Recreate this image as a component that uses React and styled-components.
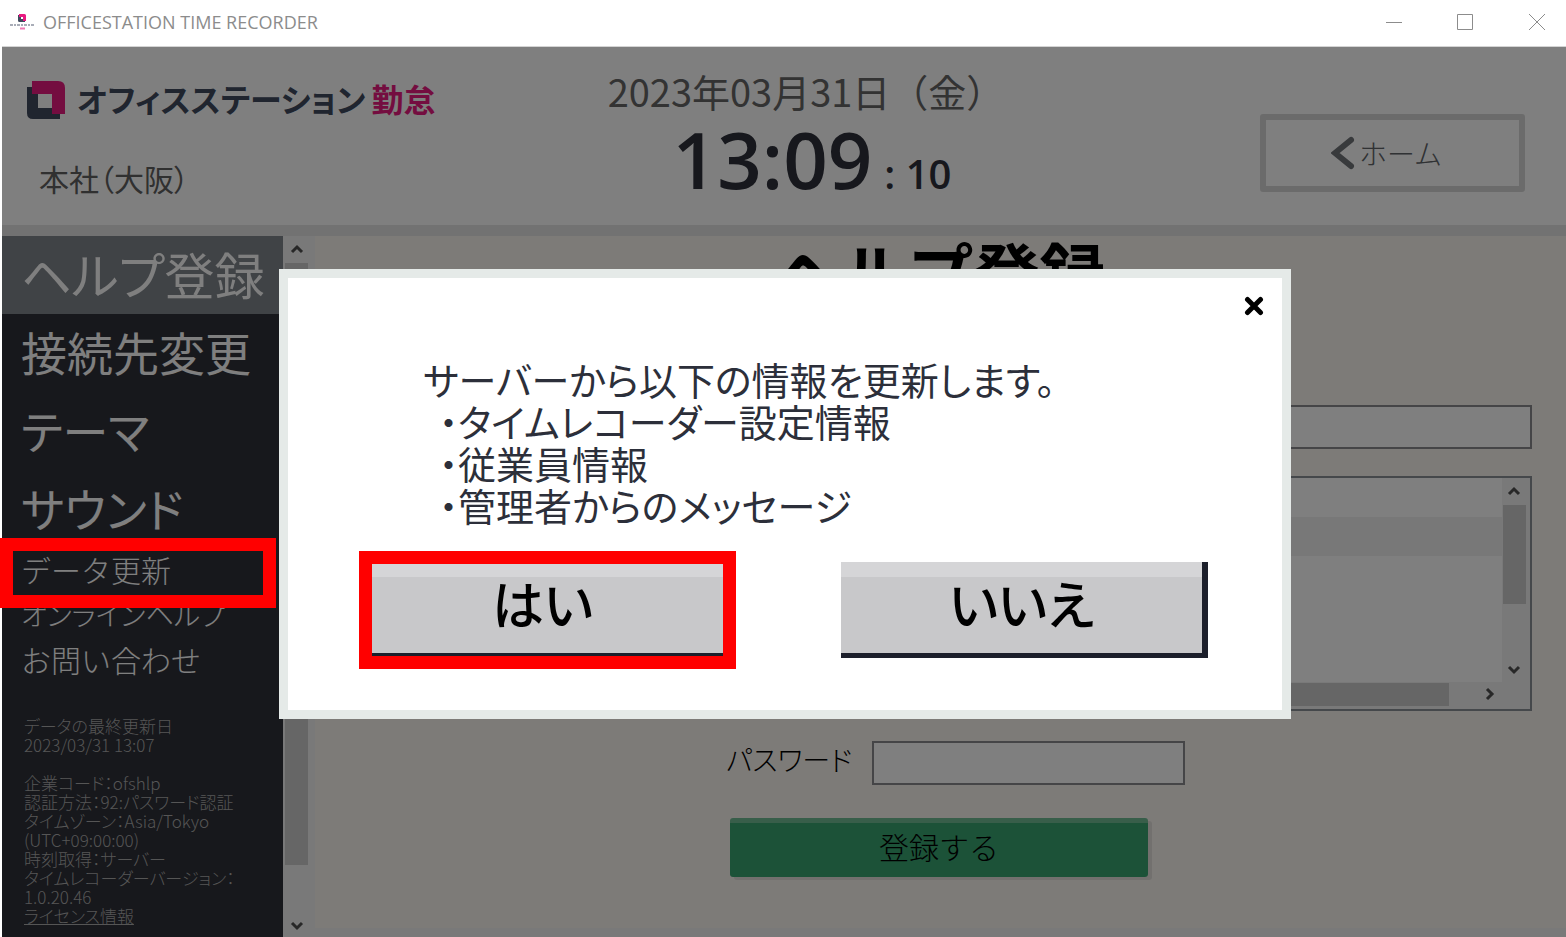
import React from "react";
import styled, { createGlobalStyle, css } from "styled-components";

const JP = `"Noto Sans CJK JP", "Liberation Sans", sans-serif`;

const GlobalStyle = createGlobalStyle`
  *, *::before, *::after { box-sizing: border-box; }
  body { margin: 0; background: #fff; font-family: ${JP}; }
  button, input { font-family: inherit; }
  h1, h2, p, ul, dl, dd { margin: 0; padding: 0; }
  ul { list-style: none; }
`;

const proportional = css`
  font-feature-settings: "palt";
`;

const Window = styled.div`
  display: flex;
  flex-direction: column;
  min-height: 100vh;
  padding-left: 2px;
`;

const TitleBar = styled.div`
  display: flex;
  align-items: center;
  height: 47px;
  padding: 0 0 2px 7px;
  border-bottom: 1px solid #d4d4d4;
`;

const TitleText = styled.span`
  flex: 1;
  margin-left: 8px;
  font-family: "Open Sans", sans-serif;
  font-size: 18px;
  line-height: 24px;
  color: #8c8c8c;
`;

const WindowControls = styled.div`
  display: flex;
  align-items: center;
`;

const WindowButton = styled.button`
  display: flex;
  align-items: center;
  justify-content: center;
  width: 71px;
  height: 44px;
  padding: 0;
  border: 0;
  background: none;

  &:last-child { width: 66px; padding-left: 8px; }
`;

const AppFrame = styled.div`
  position: relative;
  display: flex;
  flex: 1;
  flex-direction: column;
`;

const Header = styled.header`
  display: grid;
  grid-template-columns: 1fr auto 1fr;
  height: 189px;
  padding: 0 41px 0 25px;
  border-bottom: 11px solid #e4e4e4;
  background: #fff;
`;

const Brand = styled.div`
  display: flex;
  flex-direction: column;
  gap: 37px;
  padding-top: 32px;
`;

const BrandRow = styled.div`
  display: flex;
  align-items: center;
  gap: 12px;
  height: 42px;
`;

const BrandName = styled.span`
  ${proportional}
  padding-bottom: 4px;
  font-size: 32px;
  line-height: 38px;
  font-weight: 700;
  color: #404a5e;
  white-space: nowrap;
`;

const BrandProduct = styled.span`
  margin-left: 6px;
  color: #e81a80;
`;

const Branch = styled.p`
  ${proportional}
  padding-left: 12px;
  font-size: 30px;
  line-height: 40px;
  color: #606060;
`;

const ClockBlock = styled.div`
  display: flex;
  flex-direction: column;
  align-items: center;
  padding: 20px 0 0 60px;
`;

const DateText = styled.p`
  font-size: 38px;
  line-height: 48px;
  color: #666;
  white-space: nowrap;
`;

const Clock = styled.p`
  display: flex;
  align-items: baseline;
  gap: 12px;
  padding-left: 12px;
  font-family: "Open Sans", sans-serif;
  font-weight: 600;
  font-size: 78px;
  line-height: 88px;
  color: #2e303a;
`;

const Seconds = styled.span`
  font-size: 40px;
`;

const HomeButton = styled.button`
  display: flex;
  align-items: center;
  justify-content: center;
  gap: 4px;
  justify-self: end;
  width: 265px;
  height: 78px;
  margin-top: 67px;
  padding: 0 12px 0 0;
  border: 6px solid #d7d7d7;
  border-radius: 3px;
  background: #fff;
  font-size: 28px;
  font-weight: 300;
  color: #606468;
`;

const Body = styled.div`
  display: flex;
  flex: 1;
`;

const Sidebar = styled.nav`
  flex: none;
  width: 281px;
  background: #2e3038;
`;

const MenuItem = styled.li`
  position: relative;
  display: flex;
  height: ${(p) => (p.$small ? "45px" : "78px")};
  background: ${(p) => (p.$active ? "#80868c" : "none")};
`;

const MenuLink = styled.a`
  display: flex;
  align-items: center;
  width: 100%;
  padding: 0 0 4px 19px;
  font-size: ${(p) => p.$size}px;
  font-weight: ${(p) => (p.$size <= 30 ? 300 : 400)};
  line-height: 40px;
  color: #fff;
  text-decoration: none;
  white-space: nowrap;
  ${(p) => p.$tight && proportional}
`;

const Highlight = styled.span`
  position: absolute;
  z-index: 3;
  inset: ${(p) => p.$inset};
  border: 13px solid #f00;
  pointer-events: none;
`;

const Info = styled.div`
  ${proportional}
  padding: 33px 0 0 22px;
  font-size: 17px;
  font-weight: 300;
  line-height: 19px;
  color: #aaa;
  white-space: nowrap;

  p + p { margin-top: ${(p) => p.$gap}px; }
`;

const InfoLink = styled.a`
  color: inherit;
`;

const ScrollTrack = styled.div`
  display: flex;
  flex: none;
  flex-direction: ${(p) => (p.$horizontal ? "row" : "column")};
  align-items: center;
  justify-content: space-between;
  background: #f2f2f2;
`;

const PageScroll = styled(ScrollTrack)`
  width: 32px;
  padding: 0 7px 5px 2px;
`;

const ArrowBox = styled.span`
  display: flex;
  align-items: center;
  justify-content: center;
  width: ${(p) => p.$w}px;
  height: ${(p) => p.$h}px;
`;

const PageThumb = styled.span`
  width: 23px;
  flex: 602 0 0;
  background: #cdcdcd;
`;

const TrackRest = styled.span`
  flex: ${(p) => p.$grow} 0 0;
`;

const Content = styled.main`
  display: flex;
  flex: 1;
  flex-direction: column;
  min-width: 0;
  border-bottom: 9px solid #f2f2f2;
  background: #faf6f1;
`;

const PageTitle = styled.h1`
  height: 169px;
  font-size: 66px;
  line-height: 68px;
  font-weight: 700;
  text-align: center;
  color: #000;
`;

const Form = styled.form`
  display: grid;
  grid-template-columns: 146px 1fr;
  align-self: flex-end;
  width: 806px;
  margin-right: 34px;
`;

const TextBox = styled.input`
  grid-column: 2;
  width: ${(p) => (p.$short ? "313px" : "100%")};
  height: 44px;
  padding: 0 8px;
  border: 2px solid #8a8a8e;
  border-radius: 0;
  background: #fff;
  font-size: 24px;
`;

const FieldLabel = styled.label`
  ${proportional}
  font-size: 28px;
  font-weight: 300;
  line-height: 36px;
  color: #000;
`;

const StaffList = styled.div`
  display: grid;
  grid-column: 2;
  grid-template-columns: 1fr 28px;
  grid-template-rows: 1fr 27px;
  height: 235px;
  margin: 27px 0 30px;
  border: 2px solid #8a9096;
  background: #f2f2f2;
`;

const Rows = styled.ul`
  background: #fff;
`;

const Row = styled.li`
  height: 39px;
  background: ${(p) => (p.$shaded ? "#f0f0f0" : "#fff")};
`;

const ListScroll = styled(ScrollTrack)`
  padding: ${(p) => (p.$horizontal ? "0 0 3px" : "0 4px 0 0")};
`;

const ListThumb = styled.span`
  width: ${(p) => (p.$horizontal ? "auto" : "23px")};
  height: ${(p) => (p.$horizontal ? "23px" : "auto")};
  flex: ${(p) => p.$grow} 0 0;
  background: #cdcdcd;
`;

const SubmitButton = styled.button`
  grid-column: 1 / -1;
  width: 418px;
  height: 59px;
  margin: 33px 0 0 4px;
  padding: 0 0 4px;
  border: 0;
  border-radius: 3px;
  background: linear-gradient(#70bc94 0 5px, #38a470 5px);
  box-shadow: 4px 3px 0 #e4e0dc;
  font-size: 30px;
  font-weight: 300;
  color: #000;
`;

const Overlay = styled.div`
  position: absolute;
  z-index: 2;
  inset: 0;
  display: flex;
  align-items: center;
  justify-content: center;
  padding: 4px 0 0 2px;
  background: rgba(0, 0, 0, 0.5);
`;

const Dialog = styled.div`
  position: relative;
  width: 1012px;
  padding: 80px 74px 52px;
  border: 9px solid #e5eae8;
  background: #fff;
`;

const CloseButton = styled.button`
  position: absolute;
  top: 12px;
  right: 12px;
  display: flex;
  align-items: center;
  justify-content: center;
  width: 32px;
  height: 32px;
  padding: 0;
  border: 0;
  background: none;
`;

const Message = styled.div`
  ${proportional}
  padding-left: 61px;
  font-size: 38px;
  line-height: 42px;
  color: #2c2f3a;
  white-space: nowrap;

  ul { padding-left: 16px; }
`;

const DialogActions = styled.div`
  display: flex;
  gap: 112px;
  margin-top: 36px;
`;

const Choice = styled.div`
  position: relative;
`;

const ChoiceButton = styled.button`
  ${proportional}
  width: 367px;
  height: 96px;
  padding: 0 0 10px;
  border: 0 solid #1c1f2b;
  border-width: 0 6px 5px 0;
  background: linear-gradient(#d5d5d7 0 15px, #c8c8ca 15px);
  font-size: 52px;
  font-weight: 500;
  line-height: 60px;
  color: #000;
`;

const chevrons = {
  up: "M2 9 L7 4 L12 9",
  down: "M2 5 L7 10 L12 5",
  right: "M5 2 L10 7 L5 12",
};

function Chevron({ dir }) {
  return (
    <svg width="14" height="14" viewBox="0 0 14 14" aria-hidden="true">
      <path d={chevrons[dir]} fill="none" stroke="#505050" strokeWidth="3" />
    </svg>
  );
}

function LogoMark({ size }) {
  return (
    <svg width={size} height={size} viewBox="0 0 38 38" aria-hidden="true">
      <path d="M0 6H11V27H33V38H6Q0 38 0 32Z" fill="#404a5e" />
      <path d="M5 0H31Q38 0 38 7V33H25V13H5Z" fill="#e81a80" />
    </svg>
  );
}

function TitleIcon() {
  return (
    <svg width="26" height="18" viewBox="0 0 26 18" aria-hidden="true">
      <path d="M9 2H12V6H16V9H10.500Q9 9 9 7.500Z" fill="#404a5e" />
      <path d="M10 1H15.500Q17 1 17 2.500V8H14V4H10Z" fill="#e81a80" />
      <path d="M1 12H25" stroke="#a9adb8" strokeWidth="2" strokeDasharray="3 1 2 1" />
      <path d="M11 15.500H16" stroke="#f07ab4" strokeWidth="2" />
    </svg>
  );
}

const bigItems = [
  { label: "ヘルプ登録", size: 50, active: true, tight: true },
  { label: "接続先変更", size: 46 },
  { label: "テーマ", size: 46, tight: true },
  { label: "サウンド", size: 46, tight: true },
];

const smallItems = [
  { label: "データ更新", size: 30, highlight: true },
  { label: "オンラインヘルプ", size: 28, tight: true },
  { label: "お問い合わせ", size: 30 },
];

export default function App() {
  return (
    <>
      <GlobalStyle />
      <Window>
        <TitleBar>
          <TitleIcon />
          <TitleText>OFFICESTATION TIME RECORDER</TitleText>
          <WindowControls>
            <WindowButton aria-label="最小化">
              <svg width="16" height="16" viewBox="0 0 16 16">
                <path d="M0 8.500H16" stroke="#8c8c8c" />
              </svg>
            </WindowButton>
            <WindowButton aria-label="最大化">
              <svg width="16" height="16" viewBox="0 0 16 16">
                <path d="M.5.5H15.500V15.500H.5Z" fill="none" stroke="#8c8c8c" />
              </svg>
            </WindowButton>
            <WindowButton aria-label="閉じる">
              <svg width="16" height="16" viewBox="0 0 16 16">
                <path d="M0 0L16 16M16 0L0 16" stroke="#8c8c8c" />
              </svg>
            </WindowButton>
          </WindowControls>
        </TitleBar>

        <AppFrame>
          <Header>
            <Brand>
              <BrandRow>
                <LogoMark size={38} />
                <BrandName>
                  オフィスステーション<BrandProduct>勤怠</BrandProduct>
                </BrandName>
              </BrandRow>
              <Branch>本社（大阪）</Branch>
            </Brand>
            <ClockBlock>
              <DateText>2023年03月31日（金）</DateText>
              <Clock>
                13:09<Seconds>: 10</Seconds>
              </Clock>
            </ClockBlock>
            <HomeButton>
              <svg width="24" height="34" viewBox="0 0 24 34" aria-hidden="true">
                <path d="M20 4L4 17L20 30" fill="none" stroke="#707478" strokeWidth="6" strokeLinecap="round" />
              </svg>
              ホーム
            </HomeButton>
          </Header>

          <Body>
            <Sidebar>
              <ul>
                {bigItems.map((item) => (
                  <MenuItem key={item.label} $active={item.active}>
                    <MenuLink href="#" $size={item.size} $tight={item.tight}>
                      {item.label}
                    </MenuLink>
                  </MenuItem>
                ))}
                {smallItems.map((item) => (
                  <MenuItem key={item.label} $small>
                    <MenuLink href="#" $size={item.size} $tight={item.tight}>
                      {item.label}
                    </MenuLink>
                    {item.highlight && <Highlight $inset="-10px 7px -15px -2px" />}
                  </MenuItem>
                ))}
              </ul>
              <Info $gap={19}>
                <p>
                  データの最終更新日
                  <br />
                  2023/03/31 13:07
                </p>
                <p>
                  企業コード：ofshlp
                  <br />
                  認証方法：92:パスワード認証
                  <br />
                  タイムゾーン：Asia/Tokyo
                  <br />
                  (UTC+09:00:00)
                  <br />
                  時刻取得：サーバー
                  <br />
                  タイムレコーダーバージョン：
                  <br />
                  1.0.20.46
                  <br />
                  <InfoLink href="#">ライセンス情報</InfoLink>
                </p>
              </Info>
            </Sidebar>

            <PageScroll>
              <ArrowBox $w={23} $h={27}>
                <Chevron dir="up" />
              </ArrowBox>
              <PageThumb />
              <TrackRest $grow={53} />
              <ArrowBox $w={23} $h={14}>
                <Chevron dir="down" />
              </ArrowBox>
            </PageScroll>

            <Content>
              <PageTitle>ヘルプ登録</PageTitle>
              <Form onSubmit={(e) => e.preventDefault()}>
                <TextBox aria-label="検索" />
                <StaffList>
                  <Rows>
                    <Row />
                    <Row $shaded />
                  </Rows>
                  <ListScroll>
                    <ArrowBox $w={23} $h={27}>
                      <Chevron dir="up" />
                    </ArrowBox>
                    <ListThumb $grow={98} />
                    <TrackRest $grow={50} />
                    <ArrowBox $w={23} $h={27}>
                      <Chevron dir="down" />
                    </ArrowBox>
                  </ListScroll>
                  <ListScroll $horizontal>
                    <ArrowBox $w={27} $h={23} />
                    <ListThumb $horizontal $grow={550} />
                    <TrackRest $grow={26} />
                    <ArrowBox $w={27} $h={23}>
                      <Chevron dir="right" />
                    </ArrowBox>
                  </ListScroll>
                </StaffList>
                <FieldLabel htmlFor="password">パスワード</FieldLabel>
                <TextBox id="password" type="password" $short />
                <SubmitButton type="submit">登録する</SubmitButton>
              </Form>
            </Content>
          </Body>

          <Overlay>
            <Dialog role="dialog" aria-modal="true" aria-label="データ更新">
              <CloseButton aria-label="閉じる">
                <svg width="20" height="20" viewBox="0 0 20 20">
                  <path d="M3.500 3.500L16.500 16.500M16.500 3.500L3.500 16.500" stroke="#000" strokeWidth="5" strokeLinecap="round" />
                </svg>
              </CloseButton>
              <Message>
                <p>サーバーから以下の情報を更新します。</p>
                <ul>
                  <li>・タイムレコーダー設定情報</li>
                  <li>・従業員情報</li>
                  <li>・管理者からのメッセージ</li>
                </ul>
              </Message>
              <DialogActions>
                <Choice>
                  <ChoiceButton>はい</ChoiceButton>
                  <Highlight $inset="-11px -7px -11px -3px" />
                </Choice>
                <Choice>
                  <ChoiceButton>いいえ</ChoiceButton>
                </Choice>
              </DialogActions>
            </Dialog>
          </Overlay>
        </AppFrame>
      </Window>
    </>
  );
}
